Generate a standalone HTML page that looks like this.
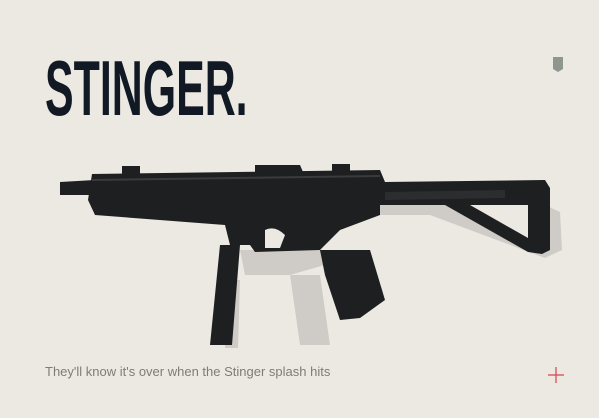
<!DOCTYPE html><html><head><style>
body{margin:0;width:599px;height:418px;background:#ece8e2;overflow:hidden;position:relative;font-family:"Liberation Sans",sans-serif}
h1{position:absolute;left:45px;top:38px;margin:0;font:bold 78px/100px "Liberation Sans",sans-serif;color:#111a24;transform:scaleX(0.55);transform-origin:left top;letter-spacing:0}
p{position:absolute;left:45px;top:364px;margin:0;font-size:13px;color:#7f7c78}
</style></head><body>
<h1>STINGER.</h1>
<svg style="position:absolute;left:553px;top:57px" width="11" height="16"><path d="M0 0H10V12L5 15L0 12Z" fill="#8f9690"/></svg>
<svg style="position:absolute;left:546px;top:365px" width="20" height="20"><path d="M10 2V18M2 10H18" stroke="#d9434f" stroke-width="1.2"/></svg>
<svg style="position:absolute;left:0;top:0" width="599" height="418">
<g fill="#cfccc7">
<path d="M380 205L545 205L560 212L562 250L545 258L430 215L380 215Z"/>
<path d="M240 250L330 250L335 262L290 275L245 275Z"/>
<path d="M290 275L320 275L330 345L300 345Z"/>
<path d="M225 280L240 280L238 348L225 348Z"/>
</g>
<g fill="#1e1f20">
<path d="M60 182L95 180L95 195L60 195Z"/>
<path d="M92 174L380 170L385 182L545 180L550 188L550 250L542 254L528 252L445 205L380 205L380 215L340 230L320 250L255 252L250 245L230 245L225 225L95 215L88 200Z" fill-rule="evenodd"/>
<path d="M385 192L505 190L505 198L385 200Z" fill="#2c2d2f"/>
<path d="M470 205L528 205L528 238Z" fill="#ece8e2"/>
<path d="M220 245L240 245L232 345L210 345Z"/>
<path d="M320 250L370 250L385 300L360 318L340 320L325 275Z"/>
<path d="M255 165L300 165L303 172L255 172Z"/>
<path d="M122 166L140 166L140 174L122 174Z"/>
<path d="M332 164L350 164L350 172L332 172Z"/>
</g>
<path d="M92 180L380 176" stroke="#3a3b3d" stroke-width="2"/>
<path d="M265 230Q275 225 285 235L280 248L265 248Z" fill="#ece8e2"/>
</svg>
<p>They'll know it's over when the Stinger splash hits</p>
</body></html>
